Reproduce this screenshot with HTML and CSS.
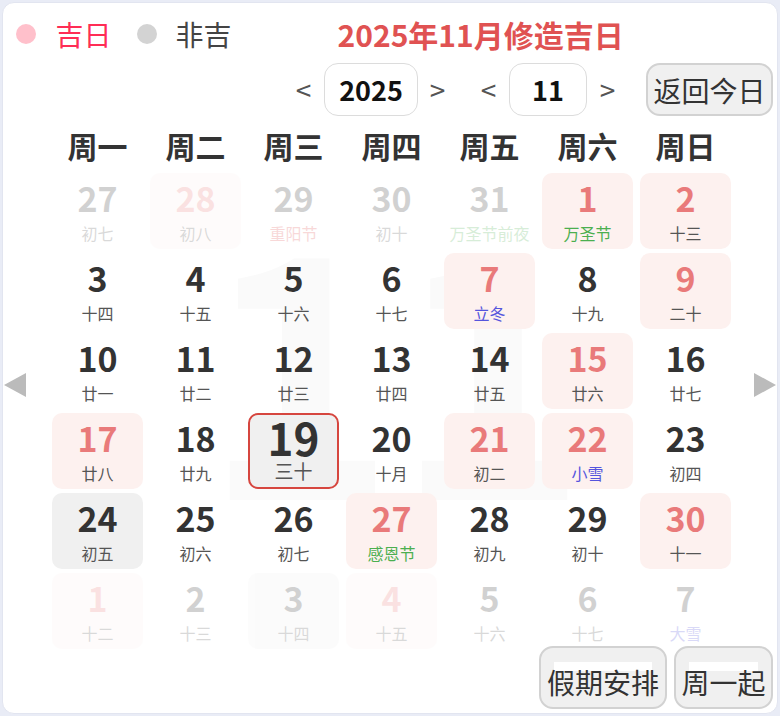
FILE: index.html
```html
<!DOCTYPE html>
<html lang="zh-CN">
<head>
<meta charset="utf-8">
<title>2025年11月修造吉日</title>
<link rel="stylesheet" href="styles.css">
</head>
<body>
<div class="card">
  <div class="wm">11</div>
  <div class="legend">
    <span class="dot dot-good"></span><span class="lg lg-good">吉日</span>
    <span class="dot dot-bad"></span><span class="lg lg-bad">非吉</span>
    <span class="title">2025年11月修造吉日</span>
  </div>
  <div class="nav">
    <span class="chev">&lt;</span>
    <span class="sel sel-year">2025</span>
    <span class="chev chev-2">&gt;</span>
    <span class="chev chev-3">&lt;</span>
    <span class="sel sel-month">11</span>
    <span class="chev chev-4">&gt;</span>
    <span class="btn btn-today"><span class="btn-t">返回今日</span></span>
  </div>
  <div class="main">
    <svg class="arrow" viewBox="0 0 22 24"><polygon points="22,0 22,24 0,12" fill="#bbbbbb"/></svg>
    <div class="cal">
      <div class="week">
        <span>周一</span><span>周二</span><span>周三</span><span>周四</span><span>周五</span><span>周六</span><span>周日</span>
      </div>
      <div class="days">
        <div class="cell other"><span class="num">27</span><span class="lun">初七</span></div>
        <div class="cell other red bg"><span class="num">28</span><span class="lun">初八</span></div>
        <div class="cell other"><span class="num">29</span><span class="lun fr">重阳节</span></div>
        <div class="cell other"><span class="num">30</span><span class="lun">初十</span></div>
        <div class="cell other"><span class="num">31</span><span class="lun fg">万圣节前夜</span></div>
        <div class="cell red bg"><span class="num">1</span><span class="lun fg">万圣节</span></div>
        <div class="cell red bg"><span class="num">2</span><span class="lun">十三</span></div>

        <div class="cell"><span class="num">3</span><span class="lun">十四</span></div>
        <div class="cell"><span class="num">4</span><span class="lun">十五</span></div>
        <div class="cell"><span class="num">5</span><span class="lun">十六</span></div>
        <div class="cell"><span class="num">6</span><span class="lun">十七</span></div>
        <div class="cell red bg"><span class="num">7</span><span class="lun fb">立冬</span></div>
        <div class="cell"><span class="num">8</span><span class="lun">十九</span></div>
        <div class="cell red bg"><span class="num">9</span><span class="lun">二十</span></div>

        <div class="cell"><span class="num">10</span><span class="lun">廿一</span></div>
        <div class="cell"><span class="num">11</span><span class="lun">廿二</span></div>
        <div class="cell"><span class="num">12</span><span class="lun">廿三</span></div>
        <div class="cell"><span class="num">13</span><span class="lun">廿四</span></div>
        <div class="cell"><span class="num">14</span><span class="lun">廿五</span></div>
        <div class="cell red bg"><span class="num">15</span><span class="lun">廿六</span></div>
        <div class="cell"><span class="num">16</span><span class="lun">廿七</span></div>

        <div class="cell red bg"><span class="num">17</span><span class="lun">廿八</span></div>
        <div class="cell"><span class="num">18</span><span class="lun">廿九</span></div>
        <div class="cell today"><span class="num">19</span><span class="lun">三十</span></div>
        <div class="cell"><span class="num">20</span><span class="lun">十月</span></div>
        <div class="cell red bg"><span class="num">21</span><span class="lun">初二</span></div>
        <div class="cell red bg"><span class="num">22</span><span class="lun fb">小雪</span></div>
        <div class="cell"><span class="num">23</span><span class="lun">初四</span></div>

        <div class="cell gray"><span class="num">24</span><span class="lun">初五</span></div>
        <div class="cell"><span class="num">25</span><span class="lun">初六</span></div>
        <div class="cell"><span class="num">26</span><span class="lun">初七</span></div>
        <div class="cell red bg"><span class="num">27</span><span class="lun fg">感恩节</span></div>
        <div class="cell"><span class="num">28</span><span class="lun">初九</span></div>
        <div class="cell"><span class="num">29</span><span class="lun">初十</span></div>
        <div class="cell red bg"><span class="num">30</span><span class="lun">十一</span></div>

        <div class="cell other red bg"><span class="num">1</span><span class="lun">十二</span></div>
        <div class="cell other"><span class="num">2</span><span class="lun">十三</span></div>
        <div class="cell other gray"><span class="num">3</span><span class="lun">十四</span></div>
        <div class="cell other red bg"><span class="num">4</span><span class="lun">十五</span></div>
        <div class="cell other"><span class="num">5</span><span class="lun">十六</span></div>
        <div class="cell other"><span class="num">6</span><span class="lun">十七</span></div>
        <div class="cell other"><span class="num">7</span><span class="lun fb">大雪</span></div>
      </div>
    </div>
    <svg class="arrow arrow-r" viewBox="0 0 22 24"><polygon points="0,0 0,24 22,12" fill="#bbbbbb"/></svg>
  </div>
  <div class="foot">
    <span class="btn btn-low btn-hol"><span class="btn-t">假期安排</span></span>
    <span class="btn btn-low btn-mon"><span class="btn-t">周一起</span></span>
  </div>
</div>
</body>
</html>
```

FILE: styles.css
```css
* { box-sizing: border-box; }
html, body { margin: 0; padding: 0; }
body {
  background: #e9ecf6;
  font-family: "Noto Sans CJK SC", "Noto Sans", sans-serif;
  color: #333;
}
.card {
  position: relative;
  margin: 2px;
  width: 776px;
  height: 712px;
  background: #fff;
  border: 1px solid #e2e5f0;
  border-radius: 12px;
  padding-top: 6px;
  overflow: hidden;
}
.wm {
  position: absolute;
  left: 200px;
  top: 192px;
  font-size: 326px;
  line-height: 1;
  font-weight: 700;
  color: #fafafa;
  z-index: 0;
}
.legend, .nav, .main { position: relative; z-index: 1; }

.legend {
  display: flex;
  align-items: center;
  height: 50px;
  padding-left: 13px;
}
.dot { width: 20px; height: 20px; border-radius: 50%; flex: none; }
.dot-good { background: #ffc0cb; }
.dot-bad { background: #d3d3d3; margin-left: 25.5px; }
.lg { font-size: 28px; line-height: 28px; margin-left: 19.5px; }
.lg-good { color: #ff2d55; }
.lg-bad { color: #444; margin-left: 18.5px; }
.title {
  margin-left: 106px;
  font-size: 30px;
  line-height: 30px;
  font-weight: 700;
  color: #e05252;
}

.nav {
  display: flex;
  align-items: center;
  justify-content: flex-end;
  height: 53px;
  margin-top: 4px;
  padding-right: 4px;
}
.chev {
  width: 19px;
  text-align: center;
  font-size: 28px;
  line-height: 53px;
  color: #555;
}
.chev-2 { margin-left: 10px; }
.chev-3 { margin-left: 32px; }
.chev-4 { margin-left: 11px; }
.sel {
  height: 53px;
  border: 1px solid #dcdcdc;
  border-radius: 14px;
  display: flex;
  align-items: center;
  justify-content: center;
  font-size: 27px;
  font-weight: 700;
  color: #111;
}
.sel-year { width: 94px; margin-left: 11px; }
.sel-month { width: 78px; margin-left: 11px; }

.btn {
  background: #f0f0f0;
  border: 2px solid #d2d2d2;
  border-radius: 14px;
  font-size: 28px;
  line-height: 28px;
  color: #333;
  display: flex;
  align-items: center;
  justify-content: center;
  position: relative;
}
.btn-t { position: relative; z-index: 1; }
.btn-today { margin-left: 29px; width: 127px; height: 53px; }

.main {
  display: flex;
  align-items: flex-start;
  padding-left: 1px;
}
.arrow { width: 22px; height: 24px; margin-top: 257px; flex: none; }
.cal { width: 679px; margin-left: 26px; margin-right: 23px; flex: none; }
.week {
  display: grid;
  grid-template-columns: repeat(7, 91px);
  column-gap: 7px;
  height: 57px;
  padding-top: 14px;
}
.week span {
  text-align: center;
  font-size: 30px;
  line-height: 30px;
  font-weight: 700;
  color: #333;
}
.days {
  display: grid;
  grid-template-columns: repeat(7, 91px);
  grid-auto-rows: 76px;
  gap: 4px 7px;
}
.cell {
  border-radius: 10px;
  text-align: center;
  padding-top: 6px;
}
.num {
  display: block;
  font-size: 34px;
  line-height: 38px;
  font-weight: 700;
  color: #333;
}
.lun {
  display: block;
  font-size: 16px;
  line-height: 20px;
  margin-top: 5.5px;
  color: #555;
  white-space: nowrap;
}
.bg { background: #fdf1ef; }
.gray { background: #f0f0f0; }
.red .num { color: #e97a7a; }
.other { opacity: 0.22; }
.lun.fg { color: #4caf50; }
.lun.fb { color: #5555dd; }
.lun.fr { color: #e05252; }
.today {
  background: #f0f0f0;
  border: 2px solid #d6463f;
  padding-top: 0;
}
.today .num { font-size: 44px; line-height: 44px; }
.today .lun { font-size: 19px; line-height: 22px; margin-top: 1.4px; }

.foot {
  position: absolute;
  right: 4px;
  bottom: 4px;
  display: flex;
  gap: 7px;
  z-index: 2;
}
.btn-low {
  height: 63px;
  padding-top: 20px;
  align-items: flex-start;
}
.btn-low::before {
  content: "";
  position: absolute;
  left: 13px;
  right: 13px;
  top: 14px;
  height: 9px;
  background: #fff;
}
.btn-hol { width: 128px; }
.btn-mon { width: 99px; }
```
